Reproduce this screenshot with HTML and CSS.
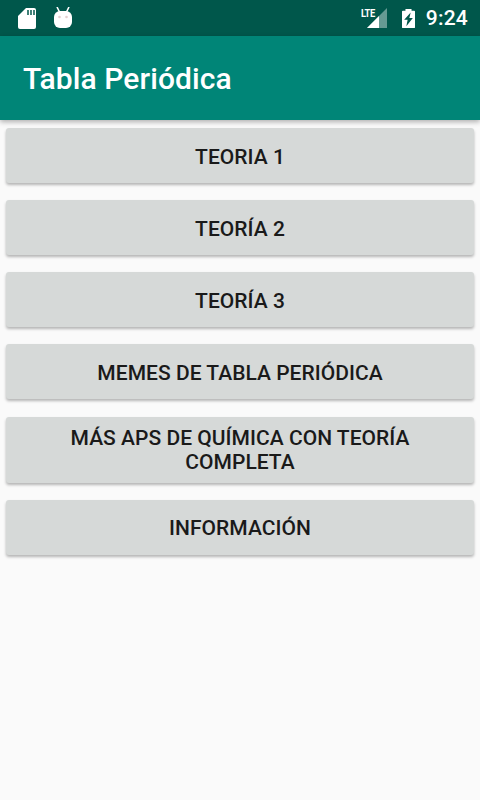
FILE: index.html
```html
<!DOCTYPE html>
<html lang="es">
<head>
<meta charset="utf-8">
<title>Tabla Periódica</title>
<link rel="stylesheet" href="styles.css">
</head>
<body>
<div class="status">
  <div class="status-left">
    <svg class="ic-sd" width="20" height="22" viewBox="0 0 20 22"><path fill="#fff" d="M9 1h8a2 2 0 0 1 2 2v17a2 2 0 0 1-2 2H3a2 2 0 0 1-2-2V9z"/><path fill="#00574b" d="M10 3h2v5h-2zM13 3h2v5h-2zM16 3h2v5h-2z" opacity=".75"/></svg>
    <svg class="ic-bot" width="20" height="22" viewBox="0 0 20 22"><path fill="none" stroke="#fff" stroke-width="1.6" d="M4 0l2.500 5M16 0l-2.500 5"/><rect fill="#fff" x="1" y="4" width="18" height="17" rx="6"/><circle cx="6.500" cy="10" r="1.300" fill="#e3cfd0"/><circle cx="13.500" cy="10" r="1.300" fill="#e3cfd0"/></svg>
  </div>
  <div class="status-right">
    <svg class="ic-signal" width="26" height="24" viewBox="0 0 26 24"><path fill="#fff" opacity=".4" d="M25 2v20H5z"/><path fill="#fff" d="M17 10v12H5z"/></svg>
    <span class="lte">LTE</span>
    <svg class="ic-batt" width="13" height="21" viewBox="0 0 15 22"><path fill="#fff" d="M4 2V0h7v2h3a1 1 0 0 1 1 1v18a1 1 0 0 1-1 1H1a1 1 0 0 1-1-1V3a1 1 0 0 1 1-1z"/><path fill="#00574b" d="M10 4L2.500 12.500h4L5 20l7.500-9.500h-4z"/></svg>
    <span class="clock">9:24</span>
  </div>
</div>
<header class="appbar"><h1>Tabla Periódica</h1></header>
<main class="list">
  <button class="btn">TEORIA 1</button>
  <button class="btn">TEORÍA 2</button>
  <button class="btn">TEORÍA 3</button>
  <button class="btn">MEMES DE TABLA PERIÓDICA</button>
  <button class="btn tall">MÁS APS DE QUÍMICA CON TEORÍA COMPLETA</button>
  <button class="btn last">INFORMACIÓN</button>
</main>
</body>
</html>
```
FILE: styles.css
```css
* { box-sizing: border-box; }
html, body { margin: 0; height: 100%; }
body { width: 480px; height: 800px; overflow: hidden; background: #fafafa; font-family: Roboto, sans-serif; }
.status { height: 36px; background: #00574b; display: flex; justify-content: space-between; align-items: center; color: #fff; padding: 0 12px 0 17px; }
.status-left { display: flex; align-items: center; gap: 16px; }
.status-right { position: relative; display: flex; align-items: center; }
.ic-signal { margin-right: 14px; }
.lte { position: absolute; left: -1px; top: 0; font-size: 11px; font-weight: 700; letter-spacing: -0.5px; line-height: 16px; transform: scaleX(.85); transform-origin: left; }
.ic-batt { margin-right: 11px; }
.clock { font-size: 21px; font-weight: 500; letter-spacing: .2px; }
.appbar { height: 84px; background: #008577; display: flex; align-items: center; padding: 0 23px; box-shadow: 0 2px 5px rgba(0,0,0,.3); position: relative; }
.appbar h1 { margin: 0; color: #fff; font-size: 30px; font-weight: 500; letter-spacing: .1px; }
.list { padding: 8px 6px 0; display: flex; flex-direction: column; gap: 17px; }
.btn { height: 55px; border: 0; border-radius: 3px; background: #d6d9d8; box-shadow: 0 2px 3px rgba(0,0,0,.28); color: #1a1a1a; font: 500 21px/24px Roboto, sans-serif; letter-spacing: .03px; padding: 2px 24px 0; text-align: center; }
.btn.tall { height: 66px; margin-top: 1px; padding-top: 0; }
.btn.last { padding-top: 0; }
```
